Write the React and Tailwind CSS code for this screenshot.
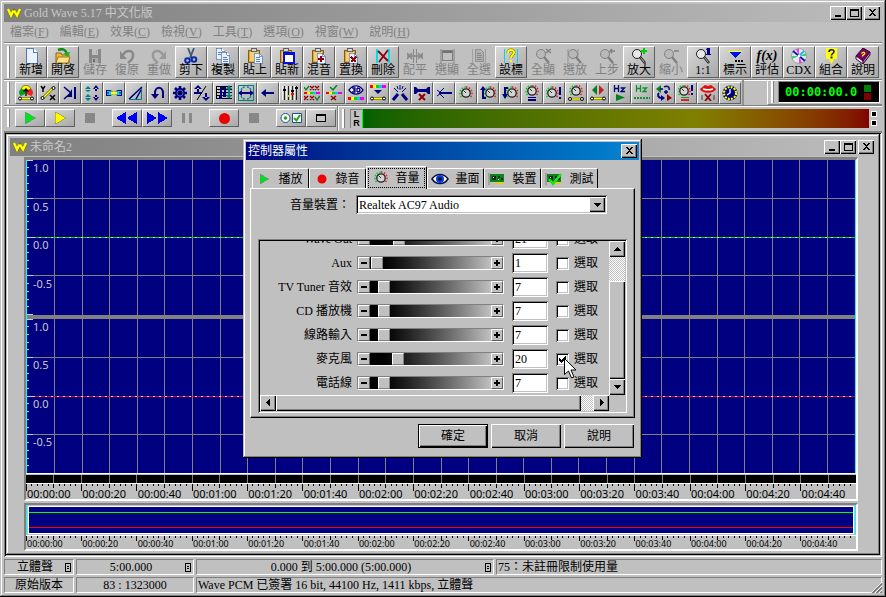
import { useState } from 'react';

const WINDOW_FRAME =
  'bg-[#c0c0c0] p-1 shadow-[inset_-1px_-1px_#000,inset_1px_1px_#c0c0c0,inset_-2px_-2px_#808080,inset_2px_2px_#fff]';
const RAISED = 'border border-t-white border-l-white border-r-[#606060] border-b-[#606060]';
const SUNKEN = 'border border-t-[#808080] border-l-[#808080] border-r-white border-b-white';
const WELL = 'shadow-[inset_1px_1px_#808080,inset_-1px_-1px_#fff,inset_2px_2px_#000,inset_-2px_-2px_#c0c0c0]';
const BUTTON_3D = 'bg-[#c0c0c0] shadow-[inset_1px_1px_#fff,inset_-1px_-1px_#000,inset_-2px_-2px_#808080]';
const SERIF = "font-['Liberation_Serif','Noto_Sans_CJK_TC',serif]";
const SANS = "font-['Noto_Sans','Liberation_Sans',sans-serif]";

const Svg = ({ w = 16, h = 16, children, className = '', smooth = false }) => (
  <svg
    width={w}
    height={h}
    viewBox={`0 0 ${w} ${h}`}
    fill="none"
    shapeRendering={smooth ? 'auto' : 'crispEdges'}
    className={`shrink-0 ${className}`}
    aria-hidden="true"
  >
    {children}
  </svg>
);

const Logo = () => (
  <Svg w={14} h={10} smooth>
    <path d="M1 1.5 4 8 7 3 10 8 13 1.5" stroke="#807000" strokeWidth="3" />
    <path d="M1 1 4 7.500 6.500 2.500M7 2.500 10 7.500 13 1" stroke="#ffff00" strokeWidth="2.400" />
  </Svg>
);

/* ---------- main toolbar icons ---------- */

const Page = ({ x = 3, y = 0, s = 1, line = '#5a78b4', fill = '#eaf1ff' }) => (
  <g transform={`translate(${x} ${y}) scale(${s})`}>
    <path d="M.5.5h7l4 4v11H.5z" fill={fill} stroke={line} />
    <path d="M7.500.5v4h4" stroke={line} fill="#fff" />
  </g>
);

const Clipboard = () => (
  <>
    <rect x="1.500" y="2.500" width="11" height="12" fill="#e0a830" stroke="#8a5a10" />
    <rect x="3" y="4" width="8" height="9" fill="#f4d070" />
    <rect x="4.500" y=".5" width="5" height="3" fill="#d8d8d8" stroke="#606060" />
  </>
);

const Lens = ({ gray, children }) => (
  <Svg w={18} smooth>
    <circle cx="7" cy="6" r="4.500" fill={gray ? '#b8b8b8' : '#e8e8e8'} stroke={gray ? '#808080' : '#202020'} />
    <path d="m10 9 5 6" stroke={gray ? '#808080' : '#101010'} strokeWidth="2.500" />
    {!gray && <path d="m10.500 9.500 4 5" stroke="#c8c8c8" />}
    {children}
  </Svg>
);

const CyanBars = ({ color = '#00e0e8' }) => <path d="M1 1h1v14H1zM14 1h1v14h-1z" stroke={color} fill={color} />;

const MAIN_ICONS = {
  新增: <Svg><Page /></Svg>,
  開啓: (
    <Svg smooth>
      <path d="M1 5h5l1 2h7v8H1z" fill="#e8b838" stroke="#8a6a10" />
      <path d="m3 9h12l-2 6H1z" fill="#ffe088" stroke="#a07818" />
      <path d="M3 2c5-2 8 0 9 4" stroke="#108818" strokeWidth="2.500" />
      <path d="m8.500 5 7-1-3 5z" fill="#20b028" />
    </Svg>
  ),
  儲存: (
    <Svg>
      <path d="M2 1h12v14H2z" fill="#888" />
      <path d="M5 1h6v6H5z" fill="#c0c0c0" />
      <path d="M9 2h1v4H9zM5 10h6v5H5z" fill="#a8a8a8" />
      <path d="M6 11h2v3H6z" fill="#707070" />
    </Svg>
  ),
  復原: (
    <Svg smooth>
      <path d="M4 7c3-6 11-5 10 1 0 3-3 5-5 7" stroke="#888" strokeWidth="2.500" />
      <path d="M1 3v8h7z" fill="#888" />
    </Svg>
  ),
  重做: (
    <Svg smooth>
      <path d="M12 7C9 1 1 2 2 8c0 3 3 5 5 7" stroke="#999" strokeWidth="2.500" />
      <path d="M15 3v8H8z" fill="#999" />
    </Svg>
  ),
  剪下: (
    <Svg smooth>
      <path d="m5 0 4 10M11 0 7 10" stroke="#405870" strokeWidth="1.800" />
      <circle cx="4.500" cy="12.500" r="2.300" stroke="#0828b0" strokeWidth="2" />
      <circle cx="11" cy="11.500" r="2.300" stroke="#0828b0" strokeWidth="2" />
    </Svg>
  ),
  複製: (
    <Svg>
      <Page x={1} y={0} s={0.75} />
      <Page x={6} y={4} s={0.75} />
      <path d="M3 4h3M3 6h3M8 9h4M8 11h5M8 13h5" stroke="#6080c0" />
    </Svg>
  ),
  貼上: (
    <Svg>
      <Clipboard />
      <Page x={7} y={5} s={0.7} />
      <path d="M9 9h4M9 11h4M9 13h4" stroke="#6080c0" />
    </Svg>
  ),
  貼新: (
    <Svg>
      <Clipboard />
      <rect x="5" y="5" width="10" height="10" fill="#fff" stroke="#0010e0" strokeWidth="2" />
      <path d="M4 4h12v3H4z" fill="#0010e0" />
    </Svg>
  ),
  混音: (
    <Svg>
      <Clipboard />
      <Page x={6} y={5} s={0.7} />
      <path d="M9 8h2v2h2v2h-2v2H9v-2H7v-2h2z" fill="#900000" />
    </Svg>
  ),
  置換: (
    <Svg>
      <Clipboard />
      <Page x={6} y={5} s={0.7} />
      <path d="m8 9 5 5M13 9l-5 5" stroke="#900000" strokeWidth="1.500" />
    </Svg>
  ),
  刪除: (
    <Svg>
      <path d="M1 1h2v14H1zM13 1h2v14h-2z" fill="#00e0e8" />
      <g shapeRendering="auto"><path d="m3 3 10 10M13 2 4 14" stroke="#900010" strokeWidth="1.800" /></g>
    </Svg>
  ),
  配平: (
    <Svg smooth>
      <path d="M6.500 1v14M9.500 1v14" stroke="#888" />
      <path d="m0 5 5 6M5 5l-5 6M11 5l5 6M16 5l-5 6M0 8h16" stroke="#888" strokeWidth="1.500" />
    </Svg>
  ),
  選顯: (
    <Svg>
      <CyanBars color="#a0a0a0" />
      <path d="M3 2h11v3H3z" fill="#707070" />
      <path d="M3.500 2.500h10v10h-10z" stroke="#808080" />
    </Svg>
  ),
  全選: (
    <Svg>
      <path d="M1 1h1v14H1zM14 1h1v14h-1z" fill="#a0a0a0" />
      <path d="M4.500 1.500h5l3 3v9h-8z" stroke="#909090" fill="#b0b0b0" />
      <path d="M6 5h4M6 7h5M6 9h5M6 11h5" stroke="#888" />
    </Svg>
  ),
  設標: (
    <Svg>
      <path d="M1 1h1v14H1zM14 1h1v14h-1z" fill="#00d8e0" />
      <g shapeRendering="auto">
        <path d="M5 5c0-4 6-4 6-.5C11 7 8 7 8 10" stroke="#807000" strokeWidth="3" />
        <path d="M5 5c0-4 6-4 6-.5C11 7 8 7 8 10" stroke="#ff0" strokeWidth="2" />
      </g>
      <path d="M7 12h2v2H7z" fill="#ff0" />
    </Svg>
  ),
  全顯: <Lens gray><path d="m12 1 5 4M17 1l-5 4" stroke="#808080" strokeWidth="1.500" /></Lens>,
  選放: <Lens gray><path d="M2 1v14M12 1v8" stroke="#909090" /></Lens>,
  上步: <Lens gray><path d="M12 3h5M14 1l-2 2 2 2" stroke="#808080" strokeWidth="1.500" /></Lens>,
  放大: <Lens><path d="M13 0h2v2h2v2h-2v2h-2V4h-2V2h2z" fill="#00d000" /></Lens>,
  縮小: <Lens gray><path d="M12 3h5" stroke="#909090" strokeWidth="2" /></Lens>,
  '1:1': <Lens><path d="M13 0h3v6h1v1h-5V6h1V2h-1z" fill="#000090" /></Lens>,
  標示: (
    <Svg>
      <path d="M1 3h14L8 10z" fill="#0010f0" />
      <path d="M1 3h14" stroke="#ff0" strokeWidth="1" />
      <path d="M8 12h2v2H8zM11 12h2v2h-2zM14 12h2v2h-2z" fill="#000" />
    </Svg>
  ),
  評估: <span className="flex h-4 items-center text-[14px] leading-4 font-bold italic">f(x)</span>,
  CDX: (
    <Svg smooth>
      <circle cx="8" cy="8" r="7.500" fill="#e8e8f4" stroke="#a0a0a0" />
      <path d="M8 8 5 1h3zM8 8l3 7H8z" fill="#e040e0" />
      <path d="m8 8 7-3v3zM8 8l-7 3V8z" fill="#40d070" />
      <path d="m2 3 12 10" stroke="#1818b0" strokeWidth="2" />
      <path d="m8 8 5-5" stroke="#30b0f0" strokeWidth="2" />
      <circle cx="8" cy="8" r="1.500" fill="#fff" />
    </Svg>
  ),
  組合: (
    <Svg smooth>
      <path d="M3 0h11v11h-3l-2.500 5L6 11H3z" fill="#ff0" />
      <path d="M6 4c0-3 5-3 5-.5 0 2-2.500 2-2.500 4" stroke="#101080" strokeWidth="1.600" />
      <path d="M7.500 8.500h2v2h-2z" fill="#101080" />
    </Svg>
  ),
  說明: (
    <Svg smooth>
      <path d="m1 8 7-8 7 4-7 9z" fill="#800060" stroke="#300030" />
      <path d="m1 8 7 5v3l-7-5z" fill="#fff" stroke="#400040" />
      <path d="m8 13 7-9v3l-7 9z" fill="#b080a0" stroke="#400040" />
      <path d="M6.500 5.500c1-2 4-1 3 .5-.5 1-2 .5-2 2.500" stroke="#ff0" strokeWidth="1.400" />
    </Svg>
  ),
};

const MAIN_TOOLS = [
  ['新增', true], ['開啓', true], ['儲存', false], ['復原', false], ['重做', false],
  ['剪下', true], ['複製', true], ['貼上', true], ['貼新', true], ['混音', true],
  ['置換', true], ['刪除', true], ['配平', false], ['選顯', false], ['全選', false],
  ['設標', true], ['全顯', false], ['選放', false], ['上步', false], ['放大', true],
  ['縮小', false], ['1:1', true], ['標示', true], ['評估', true], ['CDX', true],
  ['組合', true], ['說明', true],
];

/* ---------- effect toolbar icons ---------- */

const Knob = ({ x = 8, y = 8 }) => (
  <g shapeRendering="auto" transform={`translate(${x} ${y})`}>
    <path d="M-4.500 4A6 6 0 0 1 0-6" stroke="#00d020" strokeWidth="1.500" strokeDasharray="1.500 1.500" />
    <path d="M0-6A6 6 0 0 1 4.500 4" stroke="#f02020" strokeWidth="1.500" strokeDasharray="1.500 1.500" />
    <circle r="4.200" fill="#d4d4d4" stroke="#202020" strokeWidth="1.300" />
    <path d="m-2.500-2.500 2.500 2.500" stroke="#303030" />
  </g>
);

const Shape = ({ y = 13.5 }) => (
  <g shapeRendering="auto">
    <path d={`M2 ${y}h12`} stroke="#605800" strokeWidth="2.400" />
    <path d={`M2 ${y}h12`} stroke="#ff0" strokeWidth="1.400" />
    <circle cx="2" cy={y} r="1.500" fill="#fff" stroke="#000" />
    <circle cx="14" cy={y} r="1.500" fill="#fff" stroke="#000" />
  </g>
);

const Rainbow = ({ y, h = 3 }) => (
  <>
    <path d={`M0 ${y}h3v${h}H0z`} fill="#f00" />
    <path d={`M3 ${y}h3v${h}H3z`} fill="#ff0" />
    <path d={`M6 ${y}h3v${h}H6z`} fill="#0d0" />
    <path d={`M9 ${y}h3v${h}H9z`} fill="#0cf" />
    <path d={`M12 ${y}h4v${h}h-4z`} fill="#e0e" />
  </>
);

const Hertz = ({ color }) => (
  <path d="M2.500 0v7M6.500 0v7M2.500 3.500h4M8.500 3h4L9 6.500h4" stroke={color} strokeWidth="1.300" />
);

const NAVY = '#000080';

const EFFECTS = [
  ['Effect plug-ins', <>
    <path d="M3 4C5-1 11-1 13 4L8 6z" fill="#ff0" stroke="#303000" strokeWidth=".6" />
    <path d="M3 4c-3 2-2 6 0 7l4-2 1-3z" fill="#00a020" /><path d="M13 4c3 2 2 6 0 7L9 9 8 6z" fill="#f02020" />
    <path d="M8 4v7M5.500 6.500 8 4l2.500 2.500" stroke="#000" strokeWidth="1.300" /><Shape />
  </>],
  ['Expression', <>
    <path d="m1 1 2 3 2-3M3 4v3" stroke="#000" strokeWidth="1.500" />
    <path d="m10 10 5 5M15 10l-5 5" stroke="#000" strokeWidth="1.500" />
    <path d="m3 13 10-10" stroke="#605800" strokeWidth="2.600" /><path d="m3 13 10-10" stroke="#ff0" strokeWidth="1.500" />
    <circle cx="2.500" cy="13" r="1.500" fill="#fff" stroke="#000" /><circle cx="13.500" cy="3" r="1.500" fill="#fff" stroke="#000" />
  </>],
  ['Compressor', <><path d="m2 2 7 6-7 6" stroke={NAVY} strokeWidth="1.600" /><path d="M10 4v8H5z" fill={NAVY} /><path d="M12 2h2v12h-2z" fill={NAVY} /></>],
  ['Reverb', <>
    <path d="M4 1 1 4h6zM4 7 1 5h6zM4 9l-3 3h6zM4 16l3-3H1z" fill="#008080" />
    <path d="m12 0-3 4h6zM12 16l3-4H9zM11 3h2v3h-2zM11 10h2v3h-2z" fill={NAVY} />
  </>],
  ['Doppler', <>
    <path d="M0 5h4l4 2 4-2h4v6h-4L8 9l-4 2H0z" fill={NAVY} />
    <path d="M1 6h3l4 2 4-2h3v4h-3L8 9l-4 1H1z" fill="#00d8e8" /><path d="M5 8h6" stroke="#ff0" strokeWidth="3" /><path d="M0 8h3M13 8h3" stroke={NAVY} />
  </>],
  ['Dynamics', <><path d="M1.500 14.500h12v-12z" stroke="#008080" /><path d="M1 14 14 2M8 14l5-9" stroke={NAVY} strokeWidth="1.500" /></>],
  ['Echo', <><path d="M5 11V8c0-7 8-7 8 0v5" stroke={NAVY} strokeWidth="2" /><path d="M1 9h8l-4 5z" fill={NAVY} /></>],
  ['Filter', <>
    <path d="M8 1v14M1 8h14M3 3l10 10M13 3 3 13" stroke={NAVY} strokeWidth="2.600" />
    <circle cx="8" cy="8" r="5" fill={NAVY} /><circle cx="8" cy="8" r="3" stroke="#5868c0" /><circle cx="8" cy="8" r="1.200" fill="#000" />
  </>],
  ['Invert', <>
    <path d="M4 0 0 4h8zM3 3h2v4H3zM0 7h8v2H0zM12 16l4-4H8zM11 8h2v5h-2z" fill={NAVY} /><path d="M3 15 12 1" stroke="#000" />
  </>],
  ['Mechanize', <>
    <path d="M0 1.500h16M0 4.500h16M0 7.500h16M0 10.500h16M0 13.500h16M.5 1v13" stroke="#000" />
    <path d="M5 12V3h4v6" stroke={NAVY} strokeWidth="2" /><path d="M3 11h3v3H3zM7 8h3v4H7z" fill={NAVY} />
    <path d="m13 0-3 4h6zM13 14l3-4h-6zM12 4h2v6h-2z" fill="#008080" />
  </>],
  ['Offset', <>
    <path d="M.5.5h15v15H.5z" stroke="#008080" /><path d="M3 5c1-2 2-3 4-3M9 2c2 0 3 1 4 3M3 11c1 2 2 3 4 3M9 14c2 0 3-1 4-3" stroke="#008080" strokeWidth="1.300" strokeDasharray="2 1" />
    <path d="M3 7h10v2H3z" fill={NAVY} /><path d="M4 5v6L0 8zM12 5v6l4-3z" fill={NAVY} />
  </>],
  ['Reverse', <><path d="M3 7h11v2H3z" fill={NAVY} /><path d="M6 4v8L1 8z" fill={NAVY} /></>],
  ['Equalizer', <>
    <path d="M2.500 1v14M6.500 1v14M10.500 1v14M14.500 1v14" stroke="#202020" />
    <path d="M.5 1v14M4.500 1v14M8.500 1v14M12.500 1v14" stroke="#f0f0f0" />
    <path d="M1 5h3M9 6h3M13 3h3" stroke="#000" strokeWidth="2" /><path d="M5 10h3v2H5z" fill="#e8d000" /><path d="M9 8h3v2H9z" fill="#f00" />
  </>],
  ['Noise gate', <>
    <path d="m0 2 2 3 3-4" stroke="#008020" strokeWidth="1.300" /><path d="m6 1 4 4M10 1 6 5M11 1l4 4M15 1l-4 4" stroke="#900000" strokeWidth="1.300" />
    <Rainbow y={7} h={2} /><path d="m0 11 4 4M4 11l-4 4M6 11l4 4M10 11l-4 4" stroke="#900000" strokeWidth="1.300" /><path d="m11 12 2 3 3-4" stroke="#008020" strokeWidth="1.300" />
  </>],
  ['Low pass', <>
    <path d="m4 2 3 3 4-5" stroke="#008020" strokeWidth="1.500" /><Rainbow y={7} h={2} /><path d="m5 11 5 4M10 11l-5 4" stroke="#900000" strokeWidth="1.500" />
  </>],
  ['Parametric EQ', <>
    <path d="M1 5c4-5.500 10-5.500 14 0-4 5.500-10 5.500-14 0z" fill="#fff" stroke={NAVY} strokeWidth="1.300" /><path d="M4 3h3v4H4M5 5h2M9 3v4M9 3c4 0 4 4 0 4" stroke={NAVY} strokeWidth="1.300" /><Rainbow y={12} />
  </>],
  ['Spectrum filter', <><Rainbow y={0} h={3} /><path d="M4 5h8l-4 4z" fill={NAVY} /><Shape /></>],
  ['Pop and click', <>
    <path d="m1 15 5-6M15 15l-5-6" stroke={NAVY} strokeWidth="3" /><path d="M8 0v5M2 3l4 4M14 3l-4 4M5 1l1 3M11 1l-1 3" stroke={NAVY} />
  </>],
  ['Silence', <>
    <path d="M0 2h2l2 2h8l2-2h2v7h-2l-2-2H4L2 9H0z" fill={NAVY} /><path d="m5 9 6 6M11 9l-6 6" stroke="#900000" strokeWidth="2" />
  </>],
  ['Smoother', <><path d="M3 8 8 3M3 8l5 5M1 5l4 3-4 3" stroke={NAVY} /><path d="M3 7h13v2H3z" fill={NAVY} /></>],
  ['Volume', <Knob />],
  ['Fade in', <><Knob x={10} /><path d="M3 4v9h3" stroke={NAVY} strokeWidth="2" /><path d="M0 5 3 1l3 4z" fill={NAVY} /></>],
  ['Fade out', <><Knob x={10} /><path d="M3 10V3h3" stroke={NAVY} strokeWidth="2" /><path d="m0 9 3 5 3-5z" fill={NAVY} /></>],
  ['Match volume', <><Knob y={6} /><path d="M4 12h8v1H4zM4 14h8v2H4z" fill={NAVY} /></>],
  ['Maximize volume', <><Knob x={6} /><path d="M13 2h2v8h-2zM13 12h2v2h-2z" fill={NAVY} /></>],
  ['Shape volume', <><Knob y={6} /><Shape y={14} /></>],
  ['Pan', <><path d="M7 0v10L2 5z" fill="#008020" /><path d="M9 0v10l5-5z" fill="#c02020" /><Shape /></>],
  ['Playback rate', <><Hertz color={NAVY} /><path d="M4 9v7l9-3.500z" fill="#008020" /></>],
  ['Resample', <><Hertz color="#109030" /><path d="M0 13h16" stroke="#109030" strokeWidth="2" strokeDasharray="2 1" /></>],
  ['Channel mixer', <>
    <path d="M0 4 5 0v8z" fill="#008020" /><path d="M4 4h3M8 2c3-2 6 0 5 3M8 7h4M10 5v4" stroke={NAVY} strokeWidth="1.500" />
    <path d="M3 8c-2 2-1 5 3 5" stroke={NAVY} strokeWidth="2" /><path d="M5 10v6l4-3z" fill={NAVY} /><path d="M11 9v7l5-3z" fill="#900000" />
  </>],
  ['Auto gain', <><Knob x={6} y={6} /><path d="M13 0h2v6h-2zM13 8h2v2h-2z" fill={NAVY} /><path d="M3 12h8v1H3z" fill="#00a020" /><path d="M3 14h8v2H3z" fill="#e02020" /></>],
  ['Reduce vocals', <>
    <path d="M0 4 5 0l3 1 3-1 5 4c-2 5-14 5-16 0z" fill="#d81010" /><path d="M3 4c3 1 7 1 10 0" stroke="#fff" strokeWidth="1.500" />
    <path d="m5 9 6 7M11 9l-6 7" stroke="#900000" strokeWidth="1.800" /><path d="M2 10v5M14 10v5" stroke="#404040" />
  </>],
  ['Time warp', <>
    <circle cx="8" cy="8" r="7.500" fill="#000080" /><circle cx="8" cy="8" r="6" stroke="#ff0" strokeWidth="2.200" strokeDasharray="2 1.140" /><path d="M8 3v5H4l2 4 5 .5L13 7z" fill={NAVY} /><path d="M8 4v4l-3 2" stroke="#fff" strokeWidth="1.300" />
  </>],
];

const Gripper = ({ className = '' }) => (
  <span className={`w-[3px] shrink-0 self-stretch border-l-2 border-r border-l-white border-r-[#808080] ${className}`} />
);

const TOOL_BUTTON = `bg-linear-to-br from-[#d8d8d8] to-[#a8a8a8] ${RAISED}`;

/* ---------- window parts ---------- */

const CaptionButton = ({ label, children, className = '' }) => (
  <button type="button" aria-label={label} className={`flex h-[14px] w-4 items-center justify-center ${BUTTON_3D} ${className}`}>
    {children}
  </button>
);

const CloseGlyph = () => (
  <Svg w={9} h={8}>
    <path d="M1 0h2v1h1v1h1V1h1V0h2v1H7v1H6v1H5v1h1v1h1v1h1v1H6V6H5V5H4v1H3v1H1V6h1V5h1V4h1V3H3V2H2V1H1z" fill="#000" />
  </Svg>
);

const CaptionButtons = () => (
  <div className="flex pr-[2px]">
    <CaptionButton label="最小化"><Svg w={9} h={8}><path d="M1 6h6v2H1z" fill="#000" /></Svg></CaptionButton>
    <CaptionButton label="最大化"><Svg w={9} h={8}><path d="M0 0h9v8H0zM1 2v5h7V2z" fill="#000" fillRule="evenodd" /></Svg></CaptionButton>
    <CaptionButton label="關閉" className="ml-[2px]"><CloseGlyph /></CaptionButton>
  </div>
);

const Caption = ({ title }) => (
  <div className="flex h-[18px] items-center bg-linear-to-r from-[#808080] to-[#bcbcbc] pl-[3px] text-[#c8c8c8]">
    <Logo />
    <span className="flex-1 pl-[3px] leading-[18px]">{title}</span>
    <CaptionButtons />
  </div>
);

const MENUS = [['檔案', 'F'], ['編輯', 'E'], ['效果', 'C'], ['檢視', 'V'], ['工具', 'T'], ['選項', 'O'], ['視窗', 'W'], ['說明', 'H']];

const MenuBar = () => (
  <nav className="flex h-5 items-center gap-[11px] pl-[6px] text-[#808080]">
    {MENUS.map(([name, key]) => (
      <button type="button" key={name} className="whitespace-nowrap">
        {name}(<u>{key}</u>)
      </button>
    ))}
  </nav>
);

const ControlButton = ({ label, flat, children }) => (
  <button
    type="button"
    aria-label={label}
    disabled={flat}
    className={`flex h-[18px] w-[30px] items-center justify-center ${flat ? '' : TOOL_BUTTON}`}
  >
    {children}
  </button>
);

const Toolbars = () => (
  <>
    <div className="flex items-stretch border-t border-[#808080] pt-[3px] pr-[3px] pb-px pl-[3px] shadow-[inset_0_1px_#fff]">
      <Gripper className="mr-[5px]" />
      {MAIN_TOOLS.map(([name, enabled]) => (
        <button
          type="button"
          key={name}
          disabled={!enabled}
          className={`flex h-8 min-w-0 flex-1 flex-col items-center pt-px leading-[13px] whitespace-nowrap ${
            enabled ? TOOL_BUTTON : 'border border-transparent text-[#808080]'
          }`}
        >
          {MAIN_ICONS[name]}
          {name}
        </button>
      ))}
    </div>
    <div className="flex items-stretch border-t border-[#808080] shadow-[inset_0_1px_#fff]">
      <div className="flex border-r-2 border-[#909090] pt-[2px] pr-px pb-px pl-[3px]">
        <Gripper className="mr-[5px]" />
        {EFFECTS.map(([name, icon]) => (
          <button type="button" key={name} aria-label={name} className={`flex size-[22px] items-center justify-center ${TOOL_BUTTON}`}>
            <Svg smooth>{icon}</Svg>
          </button>
        ))}
      </div>
      <div className="ml-auto flex w-[115px] border-b border-l border-b-[#808080] border-l-white py-px pr-[2px] pl-[3px]">
        <Gripper className="mr-1" />
        <div className={`flex flex-1 items-center justify-between bg-black pr-2 pl-[6px] ${SUNKEN}`}>
          <span className="font-['DejaVu_Sans_Mono','Liberation_Mono',monospace] text-[12px] font-bold text-[#00ff00]">00:00:00.0</span>
          <span className="flex flex-col">
            <span className="size-[7px] bg-[#008000]" />
            <span className="mt-px size-[7px] bg-[#800000]" />
          </span>
        </div>
      </div>
    </div>
    <div className="flex items-stretch border-t border-b border-t-[#808080] border-b-[#808080] shadow-[inset_0_1px_#fff]">
      <div className="flex items-center border-r border-[#808080] py-[3px] pr-px pb-1 pl-[3px]">
        <Gripper className="mr-[5px]" />
        <ControlButton label="Play"><Svg w={14} h={12}><path d="M2 0v12l11-6z" fill="#00e020" stroke="#808080" strokeWidth=".5" /></Svg></ControlButton>
        <ControlButton label="Play selection"><Svg w={14} h={12}><path d="M2 0v12l11-6z" fill="#ffff00" stroke="#808000" strokeWidth=".5" /></Svg></ControlButton>
        <ControlButton label="Stop" flat><span className="size-[10px] bg-[#888]" /></ControlButton>
        <span className="w-[7px]" />
        <ControlButton label="Rewind"><Svg w={22} h={12}><path d="M10 0v12L0 6zM21 0v12L11 6z" fill="#0000f0" /></Svg></ControlButton>
        <ControlButton label="Fast forward"><Svg w={22} h={12}><path d="M1 0v12l10-6zM12 0v12l10-6z" fill="#0000f0" /></Svg></ControlButton>
        <ControlButton label="Pause" flat><Svg w={12} h={10}><path d="M1 0h3v10H1zM8 0h3v10H8z" fill="#888" /></Svg></ControlButton>
        <span className="w-[7px]" />
        <ControlButton label="Record"><span className="size-[11px] rounded-full bg-[#e80000]" /></ControlButton>
        <ControlButton label="Stop recording" flat><span className="size-[10px] bg-[#888]" /></ControlButton>
        <span className="w-[7px]" />
        <ControlButton label="Control properties">
          <Svg w={22} h={12} smooth>
            <circle cx="5.500" cy="6" r="4.500" fill="#fff" stroke="#205080" /><circle cx="5.500" cy="6" r="1.800" fill="#20a020" />
            <path d="M12.500 1.500h9v9h-9z" fill="#fff" stroke="#205080" /><path d="m14 6 2.500 2.500L20 3" stroke="#20a020" strokeWidth="2" />
          </Svg>
        </ControlButton>
        <ControlButton label="Control window"><Svg w={12} h={10}><path d="M1.500 1.500h9v7h-9z" stroke="#000" fill="#c8c8c8" /><path d="M1 1h10v2H1z" fill="#000" /></Svg></ControlButton>
      </div>
      <div className="flex flex-1 border-l border-white py-[3px] pr-[3px] pl-[3px]">
        <Gripper className="mr-[5px]" />
        <div className="flex w-3 flex-col items-center border-t border-l border-[#808080] font-['Liberation_Sans',sans-serif] text-[9px] leading-[9px] font-bold">
          <span>L</span>
          <span>R</span>
        </div>
        <div className="flex-1 border-l border-[#00ff00] bg-linear-to-r from-[#006000] via-[#808000] via-66% to-[#800000]" />
        <div className="flex w-[10px] flex-col items-center justify-between py-[2px]">
          <span className="size-[6px] border border-white bg-black" />
          <span className="size-[6px] border border-white bg-black" />
        </div>
      </div>
    </div>
  </>
);

/* ---------- wave view ---------- */

const COLUMNS = Array.from({ length: 29 }, (_, i) => `${((i + 1) * 100) / 30}%`);
const SIDE_TICKS = Array.from({ length: 21 }, (_, i) => i);
const RULER_TICKS = Array.from({ length: 151 }, (_, i) => i);
const TIMES = Array.from({ length: 15 }, (_, i) => {
  const s = i * 20;
  return `00:${String(Math.floor(s / 60)).padStart(2, '0')}:${String(s % 60).padStart(2, '0')}`;
});

const Channel = ({ color }) => (
  <div className={`relative min-h-[120px] flex-1 bg-[#000080] text-[11px] leading-4 text-[#c8c8c8] ${SANS}`}>
    <svg className="absolute inset-0 size-full" shapeRendering="crispEdges" aria-hidden="true">
      {COLUMNS.map((x) => <line key={x} x1={x} x2={x} y1="0" y2="100%" stroke="#808080" />)}
      {['25%', '50%', '75%'].map((y) => <line key={y} x1="0" x2="100%" y1={y} y2={y} stroke="#808080" />)}
      <line x1="0" x2="100%" y1="50%" y2="50%" stroke="#d0d0d0" />
      <line x1="8" x2="100%" y1="50%" y2="50%" stroke={color} strokeDasharray="4 2" />
      {SIDE_TICKS.map((i) => (
        <line key={i} x1="0" x2={i % 5 ? 2 : 6} y1={`${i * 5}%`} y2={`${i * 5}%`} stroke="#d0d0d0" />
      ))}
    </svg>
    <div className="absolute inset-0 flex flex-col pl-[6px]">
      {['1.0', '0.5', '0.0', '-0.5'].map((v) => <span key={v} className="flex-1">{v}</span>)}
    </div>
  </div>
);

const Ruler = ({ small }) => (
  <div className={`relative flex items-end ${SANS} ${small ? 'h-[13px] text-[9px] leading-[10px]' : 'h-[15px] text-[11px] leading-[11px]'}`}>
    <svg className="absolute inset-0 size-full" shapeRendering="crispEdges" aria-hidden="true">
      {RULER_TICKS.map((i) => {
        const x = `${(i * 100) / 150}%`;
        const long = small ? 5 : 7;
        return <line key={i} x1={x} x2={x} y1="0" y2={i % 10 === 0 ? long : i % 5 === 0 ? 4 : 2} stroke="#000" />;
      })}
    </svg>
    {TIMES.map((t) => <span key={t} className="relative flex-1 pl-px whitespace-nowrap">{t}</span>)}
  </div>
);

const WaveWindow = () => (
  <section className={`flex flex-1 flex-col ${WINDOW_FRAME}`}>
    <Caption title="未命名2" />
    <div className="mt-px mr-[18px] ml-[14px] flex flex-1 flex-col border-t-[3px] border-r-2 border-b-2 border-l-2 border-t-[#808080] border-r-white border-b-white border-l-[#808080]">
      <div className="flex flex-1 flex-col border-x border-[#00ffff]">
        <Channel color="#00e000" />
        <div className="h-1 bg-[#808080]" />
        <Channel color="#f00020" />
      </div>
      <div className="border-t border-b border-t-white border-b-white pt-px">
        <svg className="block h-2 w-full bg-black" shapeRendering="crispEdges" aria-hidden="true">
          {COLUMNS.map((x) => <line key={x} x1={x} x2={x} y1="0" y2="100%" stroke="#808080" />)}
        </svg>
      </div>
      <Ruler />
    </div>
    <div className="mt-[2px] mr-[18px] ml-[14px] flex flex-col border-2 border-t-[#808080] border-r-white border-b-white border-l-[#808080]">
      <div className="border-x border-[#00ffff] p-px">
        <div className="flex h-7 flex-col gap-[14px] border border-white bg-[#000080] pt-[5px]">
          <div className="h-px shrink-0 bg-[#00ff00]" />
          <div className="h-px shrink-0 bg-[#ff0000]" />
        </div>
      </div>
      <div className="h-px bg-white" />
      <Ruler small />
    </div>
  </section>
);

/* ---------- status bar ---------- */

const MenuMark = () => (
  <Svg w={6} h={9}>
    <path d="M.5.5h5v8h-5zM2 3h2M2 5h2" stroke="#000" />
  </Svg>
);

const Cell = ({ className = '', mark, children }) => (
  <div className={`flex h-4 items-center leading-[14px] whitespace-nowrap ${SUNKEN} ${className}`}>
    <span className="flex-1">{children}</span>
    {mark && <span className="pr-[2px]"><MenuMark /></span>}
  </div>
);

const StatusBar = () => (
  <footer className="relative flex flex-col gap-[2px] pt-[2px] text-center">
    <div className="flex gap-[2px]">
      <Cell className="w-[70px]" mark>立體聲</Cell>
      <Cell className="w-[118px]" mark>5:00.000</Cell>
      <Cell className="w-[298px]" mark>0.000 到 5:00.000 (5:00.000)</Cell>
      <Cell className="flex-1 pl-px text-left">75：未註冊限制使用量</Cell>
    </div>
    <div className="flex gap-[2px]">
      <Cell className="w-[70px]">原始版本</Cell>
      <Cell className="w-[118px]">83 : 1323000</Cell>
      <Cell className="flex-1 pl-px text-left">Wave PCM 已簽署 16 bit, 44100 Hz, 1411 kbps, 立體聲</Cell>
    </div>
    <Svg w={12} h={12} smooth className="absolute right-0 bottom-0">
      <path d="M0 12h12V0z" fill="#c0c0c0" />
      <path d="M1 12 12 1M5 12l7-7M9 12l3-3" stroke="#fff" />
      <path d="M2.500 12 12 2.500M6.500 12 12 6.500M10.500 12l1.500-1.500" stroke="#707070" strokeWidth="1.500" />
    </Svg>
  </footer>
);

/* ---------- control properties dialog ---------- */

const Card = ({ ok }) => (
  <Svg w={18} h={14} smooth>
    <path d="M1 1v12" stroke="#808080" />
    <path d="M2 2h14v8H2z" fill="#108020" />
    <path d="M4 4h4v4H4zM10 4h2v2h-2zM13 6h2v2h-2z" fill="#003010" />
    <path d="M5 5h1v1H5zM10 7h1v1h-1z" fill="#f8f8f8" />
    <path d="M7 11h9" stroke="#e8d000" strokeWidth="2" strokeDasharray="2 .5" />
    {ok && <path d="m4 7 4 5 8-10" stroke="#20e020" strokeWidth="2.500" />}
  </Svg>
);

const TABS = [
  ['播放', <Svg w={14} h={12}><path d="M2 1v10l9-5z" fill="#00e020" stroke="#808080" strokeWidth=".5" /></Svg>],
  ['錄音', <Svg w={14} h={12} smooth><circle cx="7" cy="6" r="4.500" fill="#f00000" /></Svg>],
  ['音量', <Svg smooth><Knob /></Svg>],
  ['畫面', (
    <Svg w={18} h={12} smooth>
      <path d="M1 6c4-6 12-6 16 0-4 6-12 6-16 0z" fill="#fff" stroke="#101040" strokeWidth="1.500" />
      <circle cx="9" cy="6" r="4" fill="#0040e0" /><circle cx="9" cy="6" r="1.800" fill="#000" />
    </Svg>
  )],
  ['裝置', <Card />],
  ['測試', <Card ok />],
];

const SOURCES = [
  ['Wave Out', 21, false],
  ['Aux', 1, false],
  ['TV Tuner 音效', 7, false],
  ['CD 播放機', 7, false],
  ['線路輸入', 7, false],
  ['麥克風', 20, true],
  ['電話線', 7, false],
];

const StepButton = ({ plus, label, onClick }) => (
  <button type="button" aria-label={label} onClick={onClick} className={`flex w-3 items-center justify-center bg-[#c0c0c0] ${RAISED}`}>
    <Svg w={6} h={6}>
      <path d={plus ? 'M2 0h2v2h2v2H4v2H2V4H0V2h2z' : 'M0 2h6v2H0z'} fill="#000" />
    </Svg>
  </button>
);

const SourceRow = ({ name, initial, picked }) => {
  const [value, setValue] = useState(initial);
  const [checked, setChecked] = useState(picked);
  const set = (v) => setValue(Math.max(0, Math.min(100, Number(v) || 0)));

  return (
    <div className="flex h-6 shrink-0 items-center">
      <span className="w-[92px] text-right whitespace-nowrap">{name}</span>
      <div className={`ml-[5px] flex h-[14px] w-[147px] ${SUNKEN}`}>
        <StepButton label={`${name} -`} onClick={() => set(value - 1)} />
        <input
          type="range"
          aria-label={name}
          value={value}
          onChange={(e) => set(e.target.value)}
          className="h-3 min-w-0 flex-1 appearance-none bg-linear-to-r from-black to-[#c0c0c0] [&::-webkit-slider-thumb]:h-3 [&::-webkit-slider-thumb]:w-3 [&::-webkit-slider-thumb]:appearance-none [&::-webkit-slider-thumb]:border [&::-webkit-slider-thumb]:border-t-white [&::-webkit-slider-thumb]:border-r-[#808080] [&::-webkit-slider-thumb]:border-b-[#808080] [&::-webkit-slider-thumb]:border-l-white [&::-webkit-slider-thumb]:bg-[#c0c0c0]"
        />
        <StepButton plus label={`${name} +`} onClick={() => set(value + 1)} />
      </div>
      <input
        type="text"
        aria-label={name}
        value={value}
        onChange={(e) => set(e.target.value)}
        className={`ml-2 h-5 w-9 bg-white pl-[3px] ${WELL}`}
      />
      <label className="ml-2 flex items-center gap-[5px]">
        <span className="relative flex size-[13px]">
          <input
            type="checkbox"
            checked={checked}
            onChange={(e) => setChecked(e.target.checked)}
            className={`peer size-[13px] appearance-none bg-white ${WELL}`}
          />
          <Svg w={13} h={13} className="pointer-events-none absolute inset-0 hidden peer-checked:block">
            <path d="M3 5v3h1v1h1v1h1V9h1V8h1V7h1V6h1V3H9v1H8v1H7v1H6v1H5V6H4V5z" fill="#000" />
          </Svg>
        </span>
        選取
      </label>
    </div>
  );
};

const ARROWS = {
  up: 'M4 2h1v1h1v1h1v1h1v1H1V5h1V4h1V3h1z',
  down: 'M1 2h7v1H7v1H6v1H5v1H4V5H3V4H2V3H1z',
  left: 'M6 0v7H5V6H4V5H3V4H2V3h1V2h1V1h1V0z',
  right: 'M3 0v7h1V6h1V5h1V4h1V3H6V2H5V1H4V0z',
};

const ArrowButton = ({ dir }) => (
  <button type="button" aria-label={dir} className={`flex size-4 shrink-0 items-center justify-center ${BUTTON_3D}`}>
    <Svg w={9} h={8}><path d={ARROWS[dir]} fill="#000" /></Svg>
  </button>
);

const DITHER = 'bg-[repeating-conic-gradient(#fff_0_25%,#c0c0c0_0_50%)] bg-size-[2px_2px]';

const DialogButton = ({ primary, children, onClick }) => (
  <button
    type="button"
    onClick={onClick}
    className={`h-6 w-[70px] ${primary ? 'border border-black' : ''} ${BUTTON_3D}`}
  >
    {children}
  </button>
);

const ControlDialog = () => {
  const [tab, setTab] = useState('音量');

  return (
    <div role="dialog" aria-label="控制器屬性" className={`absolute top-[139px] left-[243px] w-[399px] ${WINDOW_FRAME}`}>
      <div className="-mx-px -mt-px flex h-[18px] items-center justify-between bg-linear-to-r from-[#000080] to-[#1084d0] pr-[2px] pl-[2px] text-white">
        <span>控制器屬性</span>
        <CaptionButton label="關閉"><CloseGlyph /></CaptionButton>
      </div>
      <div className="px-[3px] pt-[6px]">
        <div role="tablist" className="flex h-[22px] items-end pl-[2px]">
          {TABS.map(([name, icon]) => {
            const active = name === tab;
            return (
              <button
                type="button"
                role="tab"
                key={name}
                aria-selected={active}
                onClick={() => setTab(name)}
                className={`flex rounded-t-[2px] border-t border-r border-l border-t-white border-r-black border-l-white bg-[#c0c0c0] ${
                  active ? 'relative z-10 -mb-px h-[23px] w-[61px] p-px' : 'h-5 w-[57px]'
                }`}
              >
                <span
                  className={`flex flex-1 items-center justify-center gap-[6px] whitespace-nowrap ${
                    active ? 'border border-dotted border-black' : ''
                  }`}
                >
                  {icon}
                  {name}
                </span>
              </button>
            );
          })}
        </div>
        <div className="border border-t-white border-r-black border-b-black border-l-white px-[7px] pt-[6px] pb-1 shadow-[inset_-1px_-1px_#808080]">
          <label className="flex items-center pr-5 pl-8">
            <span className="w-[66px] whitespace-nowrap">音量裝置：</span>
            <span className="relative flex flex-1">
              <select className={`h-[19px] w-full appearance-none rounded-none bg-white pl-[3px] ${WELL}`}>
                <option>Realtek AC97 Audio</option>
              </select>
              <span className={`pointer-events-none absolute top-[2px] right-[2px] flex h-[15px] w-4 items-center justify-center ${BUTTON_3D}`}>
                <Svg w={9} h={8}><path d={ARROWS.down} fill="#000" /></Svg>
              </span>
            </span>
          </label>
          <div className={`mt-[25px] p-[2px] ${WELL}`}>
            <div className="flex h-[154px]">
              <div className="flex flex-1 flex-col justify-end overflow-hidden">
                {SOURCES.map(([name, v, on]) => <SourceRow key={name} name={name} initial={v} picked={on} />)}
              </div>
              <div className="flex w-4 flex-col">
                <ArrowButton dir="up" />
                <div className={`h-6 ${DITHER}`} />
                <div className={`flex-1 ${BUTTON_3D}`} />
                <ArrowButton dir="down" />
              </div>
            </div>
            <div className="flex pr-4">
              <ArrowButton dir="left" />
              <div className={`flex-1 ${BUTTON_3D}`} />
              <div className={`w-3 ${DITHER}`} />
              <ArrowButton dir="right" />
            </div>
          </div>
        </div>
        <div className="flex justify-end gap-[3px] pt-[6px] pr-px pb-[6px]">
          <DialogButton primary>確定</DialogButton>
          <DialogButton>取消</DialogButton>
          <DialogButton>說明</DialogButton>
        </div>
      </div>
    </div>
  );
};

const Pointer = () => (
  <Svg w={13} h={21} smooth className="pointer-events-none absolute top-[358px] left-[564px]">
    <path d="M.5.5v16l4-3.500 3 7 2.500-1-3-7h5z" fill="#fff" stroke="#000" />
  </Svg>
);

const App = () => (
  <main className={`relative flex min-h-screen w-full flex-col text-[12px] leading-4 text-black ${SERIF} ${WINDOW_FRAME}`}>
    <Caption title="Gold Wave 5.17 中文化版" />
    <MenuBar />
    <Toolbars />
    <div className={`flex flex-1 flex-col bg-[#808080] p-[2px] ${WELL}`}>
      <WaveWindow />
    </div>
    <StatusBar />
    <ControlDialog />
    <Pointer />
  </main>
);

export default App;
